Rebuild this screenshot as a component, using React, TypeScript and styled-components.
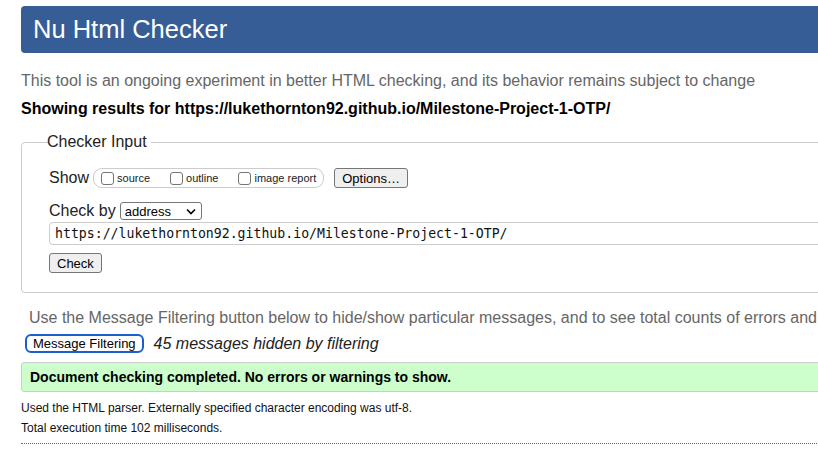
import styled, { createGlobalStyle } from 'styled-components';

const GlobalStyle = createGlobalStyle`
  html, body {
    margin: 0;
    padding: 0;
    background: #fff;
    overflow: hidden;
  }
  body {
    font-family: "Liberation Sans", Arial, sans-serif;
    color: #000;
  }
`;

const Page = styled.div`
  width: 920px;
  padding: 6px 0 0 21px;
  display: flex;
  flex-direction: column;
`;

const Header = styled.h1`
  margin: 0;
  height: 47px;
  box-sizing: border-box;
  padding: 0 12px;
  display: flex;
  align-items: center;
  background: #365d95;
  color: #fff;
  font-size: 25.5px;
  font-weight: normal;
  border-radius: 4px;
`;

const Intro = styled.p`
  margin: 18px 0 0;
  font-size: 16px;
  line-height: 19px;
  color: #666;
  white-space: nowrap;
`;

const Results = styled.p`
  margin: 9px 0 0;
  font-size: 16px;
  line-height: 19px;
  font-weight: bold;
  white-space: nowrap;
`;

const Fieldset = styled.fieldset`
  margin: 15px 0 0;
  padding: 6px 27px 19px;
  border: 1px solid #ccc;
  border-radius: 4px;
  display: flex;
  flex-direction: column;
  align-items: flex-start;
`;

const Legend = styled.legend`
  font-size: 16px;
  padding: 0 1px;
  position: relative;
  left: -3px;
  color: #222;
`;

const Row = styled.div<{ $top?: number }>`
  display: flex;
  align-items: center;
  gap: 10px;
  margin-top: ${(p) => p.$top ?? 0}px;
  font-size: 16px;
`;

const RowLabel = styled.span`
  font-size: 16px;
  color: #222;
`;

const ShowGroup = styled.div`
  display: flex;
  align-items: center;
  height: 20px;
  box-sizing: border-box;
  border: 1px solid #ccc;
  border-radius: 9px;
  padding: 0 7px;
  margin-left: -6px;
  gap: 20px;
`;

const CheckItem = styled.label`
  display: flex;
  align-items: center;
  gap: 3px;
  font-size: 11px;
  color: #222;
`;

const Box = styled.span`
  width: 13px;
  height: 13px;
  box-sizing: border-box;
  border: 1px solid #767676;
  border-radius: 3px;
  background: #fff;
`;

const Button = styled.button`
  font-family: "Liberation Sans", Arial, sans-serif;
  font-size: 13px;
  height: 20px;
  padding: 0 7px;
  background: #efefef;
  border: 1px solid #767676;
  border-radius: 3px;
  color: #000;
`;

const Select = styled.div`
  display: flex;
  align-items: center;
  justify-content: space-between;
  width: 82px;
  height: 18px;
  box-sizing: border-box;
  border: 1px solid #767676;
  border-radius: 3px;
  padding: 0 5px 0 4px;
  font-size: 13px;
  margin-left: -6px;
`;

const UrlInput = styled.div`
  margin-top: 2px;
  width: 900px;
  height: 23px;
  box-sizing: border-box;
  border: 1px solid #ccc;
  border-radius: 4px;
  display: flex;
  align-items: center;
  padding-left: 5px;
  font-family: "DejaVu Sans Mono", "Liberation Mono", monospace;
  font-size: 13.2px;
  color: #111;
  white-space: nowrap;
`;

const Hint = styled.p`
  margin: 15px 0 0 8px;
  font-size: 16px;
  line-height: 19px;
  color: #666;
  white-space: nowrap;
`;

const FilterRow = styled.div`
  display: flex;
  align-items: center;
  gap: 10px;
  margin-top: 7px;
  margin-left: 4px;
`;

const FilterButton = styled.button`
  font-family: "Liberation Sans", Arial, sans-serif;
  font-size: 13px;
  height: 19px;
  padding: 0 6px;
  background: #fff;
  border: 2px solid #1a5fd0;
  border-radius: 6px;
  color: #000;
`;

const Hidden = styled.em`
  font-size: 16px;
  color: #222;
`;

const Success = styled.div`
  margin-top: 9px;
  height: 30px;
  box-sizing: border-box;
  background: #ccffcc;
  border: 1px solid #ccc;
  border-radius: 3px;
  display: flex;
  align-items: center;
  padding-left: 8px;
  font-size: 14px;
  font-weight: bold;
`;

const Note = styled.p<{ $top: number }>`
  margin: ${(p) => p.$top}px 0 0;
  font-size: 12px;
  line-height: 14px;
  color: #111;
`;

const Dotted = styled.hr`
  margin: 8px 0 0;
  border: 0;
  border-top: 1px dotted #666;
  height: 0;
`;

const Chevron = () => (
  <svg width="10" height="7" viewBox="0 0 10 7">
    <path d="M1 1.5 L5 5.5 L9 1.5" fill="none" stroke="#000" strokeWidth="1.6" />
  </svg>
);

const App = () => (
  <>
    <GlobalStyle />
    <Page>
      <Header>Nu Html Checker</Header>
      <Intro>
        This tool is an ongoing experiment in better HTML checking, and its behavior remains subject to change
      </Intro>
      <Results>Showing results for https://lukethornton92.github.io/Milestone-Project-1-OTP/</Results>
      <Fieldset>
        <Legend>Checker Input</Legend>
        <Row $top={11}>
          <RowLabel>Show</RowLabel>
          <ShowGroup>
            <CheckItem>
              <Box />
              source
            </CheckItem>
            <CheckItem>
              <Box />
              outline
            </CheckItem>
            <CheckItem>
              <Box />
              image report
            </CheckItem>
          </ShowGroup>
          <Button>Options…</Button>
        </Row>
        <Row $top={14}>
          <RowLabel>Check by</RowLabel>
          <Select>
            address
            <Chevron />
          </Select>
        </Row>
        <UrlInput>https://lukethornton92.github.io/Milestone-Project-1-OTP/</UrlInput>
        <Row $top={8}>
          <Button>Check</Button>
        </Row>
      </Fieldset>
      <Hint>
        Use the Message Filtering button below to hide/show particular messages, and to see total counts of errors and
        warnings.
      </Hint>
      <FilterRow>
        <FilterButton>Message Filtering</FilterButton>
        <Hidden>45 messages hidden by filtering</Hidden>
      </FilterRow>
      <Success>Document checking completed. No errors or warnings to show.</Success>
      <Note $top={9}>Used the HTML parser. Externally specified character encoding was utf-8.</Note>
      <Note $top={6}>Total execution time 102 milliseconds.</Note>
      <Dotted />
    </Page>
  </>
);

export default App;
